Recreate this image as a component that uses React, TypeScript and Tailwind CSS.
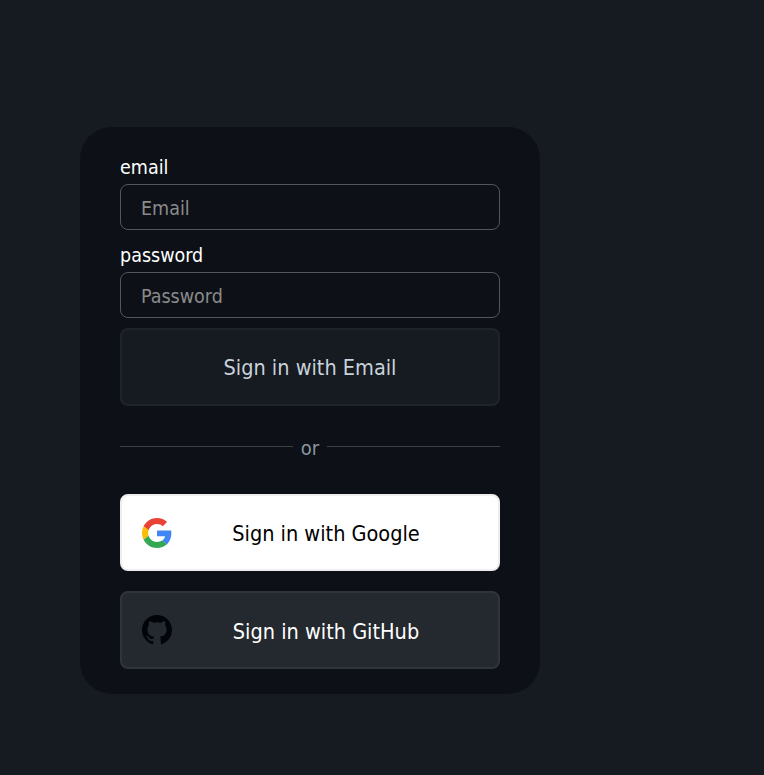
export default function App() {
  return (
    <div className="min-h-[775px] bg-[#161b22] pt-[127px] pl-[80px] font-['DejaVu_Sans_Condensed','DejaVu_Sans',sans-serif]">
      <div className="w-[460px] h-[567px] bg-[#0d1117] rounded-[32px] px-[40px] pt-[28px]">
        <label className="block text-[19.5px] leading-[25px] text-white mb-[4px]">email</label>
        <input placeholder="Email" className="block w-full h-[46px] rounded-[8px] border border-[#53565a] bg-transparent px-[20px] pt-[2px] text-[19.5px] text-white placeholder:text-[#8b8b8b] outline-none" />
        <label className="block text-[19.5px] leading-[25px] text-white mt-[13px] mb-[4px]">password</label>
        <input placeholder="Password" className="block w-full h-[46px] rounded-[8px] border border-[#53565a] bg-transparent px-[20px] pt-[2px] text-[19.5px] text-white placeholder:text-[#8b8b8b] outline-none" />
        <button className="block w-full h-[78px] mt-[10px] pt-[3px] rounded-[8px] border-2 border-[#1f242b] bg-[#161b22] text-[21.5px] text-[#c9d1d9]">Sign in with Email</button>
        <div className="flex items-center gap-[8px] mt-[29px] h-[22px]">
          <div className="flex-1 h-px bg-[#3d4043]" />
          <span className="text-[20px] leading-[22px] text-[#8b949e] relative top-[2px]">or</span>
          <div className="flex-1 h-px bg-[#3d4043]" />
        </div>
        <button className="flex items-center w-full h-[77px] mt-[37px] rounded-[8px] border-2 border-[#eeeeee] bg-white pl-[20px] text-black text-[21.5px]">
          <svg width="30" height="30" viewBox="0 0 48 48" className="shrink-0">
            <path fill="#EA4335" d="M24 9.5c3.54 0 6.71 1.22 9.21 3.6l6.85-6.85C35.9 2.38 30.47 0 24 0 14.62 0 6.51 5.38 2.56 13.22l7.98 6.19C12.43 13.72 17.74 9.5 24 9.5z" />
            <path fill="#4285F4" d="M46.98 24.55c0-1.57-.15-3.09-.38-4.55H24v9.02h12.94c-.58 2.96-2.26 5.48-4.78 7.18l7.73 6c4.51-4.18 7.09-10.36 7.09-17.65z" />
            <path fill="#FBBC05" d="M10.53 28.59c-.48-1.45-.76-2.99-.76-4.59s.27-3.14.76-4.59l-7.98-6.19C.92 16.46 0 20.12 0 24c0 3.88.92 7.54 2.56 10.78l7.97-6.19z" />
            <path fill="#34A853" d="M24 48c6.48 0 11.93-2.13 15.89-5.81l-7.73-6c-2.15 1.45-4.92 2.3-8.16 2.3-6.26 0-11.57-4.22-13.47-9.91l-7.98 6.19C6.51 42.62 14.62 48 24 48z" />
          </svg>
          <span className="flex-1 text-center pr-[18px] pt-[3px]">Sign in with Google</span>
        </button>
        <button className="flex items-center w-full h-[78px] mt-[20px] rounded-[8px] border-2 border-[#30353a] bg-[#24292f] pl-[20px] text-white text-[21.5px]">
          <svg width="30" height="30" viewBox="0 0 16 16" className="shrink-0" fill="#010409">
            <path d="M8 0C3.58 0 0 3.58 0 8c0 3.54 2.29 6.53 5.47 7.59.4.07.55-.17.55-.38 0-.19-.01-.82-.01-1.49-2.01.37-2.53-.49-2.69-.94-.09-.23-.48-.94-.82-1.13-.28-.15-.68-.52-.01-.53.63-.01 1.08.58 1.23.82.72 1.21 1.87.87 2.33.66.07-.52.28-.87.51-1.07-1.78-.2-3.64-.89-3.64-3.95 0-.87.31-1.59.82-2.15-.08-.2-.36-1.02.08-2.12 0 0 .67-.21 2.2.82.64-.18 1.32-.27 2-.27s1.36.09 2 .27c1.53-1.04 2.2-.82 2.2-.82.44 1.1.16 1.92.08 2.12.51.56.82 1.27.82 2.15 0 3.07-1.87 3.75-3.65 3.95.29.25.54.73.54 1.48 0 1.07-.01 1.93-.01 2.2 0 .21.15.46.55.38A8.01 8.01 0 0 0 16 8c0-4.42-3.58-8-8-8z" />
          </svg>
          <span className="flex-1 text-center pr-[18px] pt-[4px]">Sign in with GitHub</span>
        </button>
      </div>
    </div>
  );
}
